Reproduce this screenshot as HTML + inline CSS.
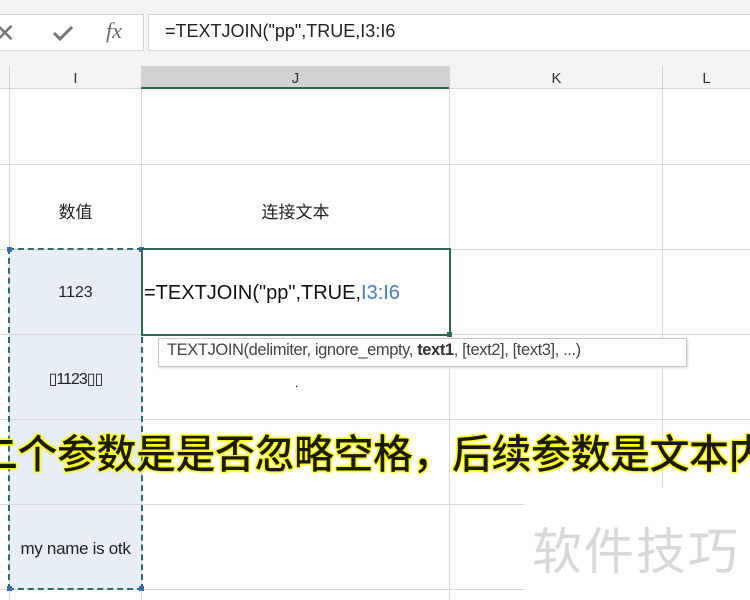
<!DOCTYPE html>
<html><head><meta charset="utf-8"><style>
*{margin:0;padding:0;box-sizing:border-box}
body{width:750px;height:600px;overflow:hidden;background:#fff;position:relative;font-family:"Liberation Sans","Noto Sans CJK SC",sans-serif}
.a{position:absolute}
.h{position:absolute;height:1px;background:#d9d9d9;left:0;width:750px}
.v{position:absolute;width:1px;background:#d9d9d9;top:89px;height:511px}
.t{position:absolute;text-align:center;color:#222}
</style></head><body>
<div class="a" style="left:0;top:0;width:750px;height:66px;background:#f3f3f3"></div>
<div class="a" style="left:0;top:14px;width:144px;height:37px;background:#fff;border:1px solid #d5d5d5;border-left:none"></div>
<div class="a" style="left:148px;top:14px;width:610px;height:37px;background:#fff;border:1px solid #d5d5d5"></div>
<div class="a" style="left:-6px;top:18px;font-size:26px;color:#777">✕</div>
<svg class="a" style="left:52px;top:24px" width="22" height="18"><path d="M2 9 L8 15 L20 3" stroke="#777" stroke-width="3" fill="none"/></svg>
<div class="a" style="left:106px;top:18px;font-family:'Liberation Serif',serif;font-style:italic;font-size:22px;color:#666">fx</div>
<div class="a" style="left:165px;top:21px;font-size:18px;color:#222">=TEXTJOIN("pp",TRUE,I3:I6</div>
<div class="a" style="left:0;top:66px;width:750px;height:23px;background:#f3f3f3;border-bottom:1px solid #d5d5d5"></div>
<div class="a" style="left:141px;top:66px;width:309px;height:23px;background:#d2d2d2;border-bottom:2px solid #217346"></div>
<div class="a" style="left:9px;top:66px;width:1px;height:23px;background:#d0d0d0"></div>
<div class="a" style="left:449px;top:66px;width:1px;height:23px;background:#d0d0d0"></div>
<div class="a" style="left:662px;top:66px;width:1px;height:23px;background:#d0d0d0"></div>
<div class="t" style="left:10px;top:70px;width:131px;font-size:15px;color:#333">I</div>
<div class="t" style="left:141px;top:70px;width:309px;font-size:15px;color:#333">J</div>
<div class="t" style="left:450px;top:70px;width:213px;font-size:15px;color:#333">K</div>
<div class="t" style="left:663px;top:70px;width:87px;font-size:15px;color:#333">L</div>
<div class="a" style="left:10px;top:249px;width:131px;height:340px;background:#e7eef8"></div>
<div class="h" style="top:164px"></div><div class="h" style="top:249px"></div><div class="h" style="top:334px"></div>
<div class="h" style="top:419px"></div><div class="h" style="top:504px"></div><div class="h" style="top:589px"></div>
<div class="v" style="left:9px"></div><div class="v" style="left:141px"></div><div class="v" style="left:449px"></div><div class="v" style="left:662px"></div>
<div class="a" style="left:8px;top:248px;width:135px;height:342px;border:2px dashed #2e6b66"></div>
<div class="a" style="left:7px;top:247px;width:5px;height:5px;background:#3a6bb0"></div>
<div class="a" style="left:139px;top:247px;width:5px;height:5px;background:#3a6bb0"></div>
<div class="a" style="left:7px;top:586px;width:5px;height:5px;background:#3a6bb0"></div>
<div class="a" style="left:139px;top:586px;width:5px;height:5px;background:#3a6bb0"></div>
<div class="a" style="left:141px;top:248px;width:310px;height:88px;border:2px solid #2f6a4e;background:#fff"></div>
<div class="a" style="left:447px;top:332px;width:5px;height:5px;background:#2f6a4e"></div>
<div class="a" style="left:144px;top:282px;font-size:20px;color:#111">=TEXTJOIN("pp",TRUE,<span style="color:#4a7ec4">I3:I6</span></div>
<div class="t" style="left:10px;top:198px;width:131px;font-size:17px">数值</div>
<div class="t" style="left:141px;top:198px;width:309px;font-size:17px">连接文本</div>
<div class="t" style="left:10px;top:284px;width:131px;font-size:16px">1123</div>
<div class="t" style="left:10px;top:369px;width:131px;font-size:16px;letter-spacing:-1px">▯1123▯▯</div>
<div class="t" style="left:10px;top:539px;width:131px;font-size:17px;letter-spacing:-0.3px">my name is otk</div>
<div class="a" style="left:295px;top:376px;font-size:12px">.</div>
<div class="a" style="left:158px;top:338px;width:529px;height:29px;background:#fff;border:1px solid #c6c6c6;box-shadow:1px 1px 2px #ddd;font-size:16.5px;color:#444;padding:2px 0 0 8px;white-space:nowrap;letter-spacing:-0.4px">TEXTJOIN(delimiter, ignore_empty, <b style="color:#333">text1</b>, [text2], [text3], ...)</div>
<div class="a" style="left:525px;top:488px;width:225px;height:112px;background:#fff"></div>
<div class="a" style="left:532px;top:512px;font-size:50px;color:#d8d8d8;letter-spacing:2px;font-family:'Noto Sans CJK SC',sans-serif">软件技巧</div>
<div class="a" style="left:-22px;top:422px;font-size:40px;font-weight:500;color:#1a1a00;white-space:nowrap;font-family:'Noto Sans CJK SC',sans-serif;letter-spacing:-0.5px;text-shadow:0 0 2px #ff0,1px 1px 1px #ff0,-1px -1px 1px #ff0,1px -1px 1px #ff0,-1px 1px 1px #ff0,0 0 4px #ee0">二个参数是是否忽略空格，后续参数是文本内</div>
</body></html>
